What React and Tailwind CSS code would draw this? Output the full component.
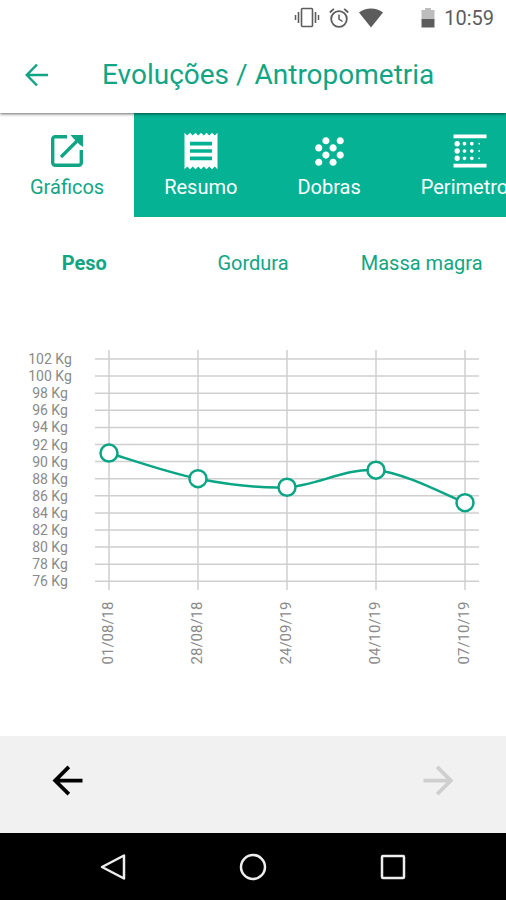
import React, { useState } from 'react';
import { MdArrowBack, MdArrowForward, MdBlurLinear, MdGrain, MdReceipt } from 'react-icons/md';

const LaunchIcon = ({ size }) => (
  <svg width={size} height={size} viewBox="0 0 36 36" fill="none" stroke="currentColor" strokeWidth="3.4">
    <path d="M18 3.700H6.200a2.500 2.500 0 0 0-2.500 2.500v23.600a2.500 2.500 0 0 0 2.500 2.500h23.600a2.500 2.500 0 0 0 2.500-2.500V17" />
    <path d="M31 5L12 24" />
    <path d="M21.500 2H34V14L30.500 11.500 24.500 5.500z" fill="currentColor" stroke="none" />
  </svg>
);

const TABS = [
  { label: 'Gráficos', icon: <LaunchIcon size={36} /> },
  { label: 'Resumo', icon: <MdReceipt size={44} /> },
  { label: 'Dobras', icon: <MdGrain size={43} /> },
  { label: 'Perimetros', icon: <MdBlurLinear size={44} /> },
];

const METRICS = ['Peso', 'Gordura', 'Massa magra'];

const WEIGHTS = [
  { date: '01/08/18', value: 91 },
  { date: '28/08/18', value: 88 },
  { date: '24/09/19', value: 87 },
  { date: '04/10/19', value: 89 },
  { date: '07/10/19', value: 85.2 },
];

const TICKS = Array.from({ length: 14 }, (_, i) => 102 - i * 2);

const xAt = (index) => 109 + index * 89;
const yAt = (value) => 18 + (102 - value) * 8.55;

// Catmull-Rom spline through the points, written as cubic beziers
const smoothPath = (points) =>
  points.slice(1).reduce((path, p2, i) => {
    const p0 = points[i - 1] || points[i];
    const p1 = points[i];
    const p3 = points[i + 2] || p2;
    const c1 = [p1[0] + (p2[0] - p0[0]) / 6, p1[1] + (p2[1] - p0[1]) / 6];
    const c2 = [p2[0] - (p3[0] - p1[0]) / 6, p2[1] - (p3[1] - p1[1]) / 6];
    return `${path} C${c1} ${c2} ${p2}`;
  }, `M${points[0]}`);

const StatusBar = () => (
  <div className="flex h-9 items-center justify-end pr-3 text-[#5c5c5c]">
    <svg width="26" height="22" viewBox="0 0 26 22" fill="none" stroke="currentColor">
      <rect x="7.500" y="1.500" width="11" height="18" rx="1" strokeWidth="1.600" />
      <path d="M4.500 5v11M21.500 5v11" strokeWidth="1.600" />
      <path d="M1.500 8v5M24.500 8v5" strokeWidth="1.500" />
    </svg>
    <svg className="ml-2" width="22" height="22" viewBox="0 0 22 22" fill="none" stroke="currentColor">
      <circle cx="11" cy="12" r="7.800" strokeWidth="1.800" />
      <path d="M11 7.500V12l3.500 2.500" strokeWidth="1.500" />
      <path d="M1.800 5.500l4-3.700M20.200 5.500l-4-3.700" strokeWidth="1.800" />
    </svg>
    <svg className="ml-2" width="26" height="22" viewBox="0 0 26 22" fill="currentColor">
      <path d="M13 20.500L1 5.500C4.500 2.800 8.500 1.500 13 1.500s8.500 1.300 12 4z" />
    </svg>
    <svg className="ml-9" width="16" height="22" viewBox="0 0 16 22" fill="currentColor">
      <path d="M1.500 3H5V1h6v2h3.500v9h-13z" fill="#bdbdbd" />
      <path d="M1.500 12h13v8.500h-13z" />
    </svg>
    <span className="ml-2 text-[20px] leading-6">10:59</span>
  </div>
);

const WeightChart = () => {
  const points = WEIGHTS.map((item, index) => [xAt(index), yAt(item.value)]);

  return (
    <svg className="w-full" viewBox="0 0 506 340" role="img" aria-label="Peso">
      <g stroke="#cfcfcf" strokeWidth="1.500">
        {TICKS.map((tick) => (
          <line key={tick} x1="95" x2="479" y1={yAt(tick)} y2={yAt(tick)} />
        ))}
        {WEIGHTS.map((item, index) => (
          <line key={item.date} x1={xAt(index)} x2={xAt(index)} y1="9" y2="249" />
        ))}
      </g>
      <g fill="#8a8a8a" textAnchor="middle">
        {TICKS.map((tick) => (
          <text key={tick} x="50" y={yAt(tick) + 5} fontSize="14">
            {tick} Kg
          </text>
        ))}
        {WEIGHTS.map((item, index) => (
          <text
            key={item.date}
            transform={`translate(${xAt(index) + 4} 292) rotate(-90)`}
            fontSize="15"
          >
            {item.date}
          </text>
        ))}
      </g>
      <path d={smoothPath(points)} fill="none" stroke="#0aa584" strokeWidth="2.500" />
      {points.map(([x, y]) => (
        <circle key={x} cx={x} cy={y} r="8.500" fill="#fff" stroke="#0aa584" strokeWidth="2.500" />
      ))}
    </svg>
  );
};

const App = () => {
  const [tab, setTab] = useState('Gráficos');
  const [metric, setMetric] = useState('Peso');

  return (
    <div className="flex min-h-screen flex-col overflow-hidden bg-white font-['Roboto',sans-serif]">
      <div className="relative shadow-[0_1px_3px_rgba(0,0,0,0.6)]">
        <StatusBar />
        <header className="flex h-[77px] items-center pl-6 text-[#12a585]">
          <button type="button" aria-label="Voltar">
            <svg width="26" height="26" viewBox="0 0 26 26" fill="none" stroke="currentColor" strokeWidth="2.500">
              <path d="M13 2.500L2.800 13 13 23.500M3 13h21" />
            </svg>
          </button>
          <h1 className="ml-[52px] text-[28px] leading-8">Evoluções / Antropometria</h1>
        </header>
      </div>

      <nav className="flex h-[104px] overflow-hidden bg-[#05b394]">
        {TABS.map((item) => (
          <button
            key={item.label}
            type="button"
            onClick={() => setTab(item.label)}
            className={`flex shrink-0 flex-col items-center px-[30px] pt-[18px] text-[20px] leading-6 ${
              tab === item.label ? 'bg-white text-[#12a585]' : 'text-white'
            }`}
          >
            <span className="flex h-10 items-center">{item.icon}</span>
            <span className="mt-1">{item.label}</span>
          </button>
        ))}
      </nav>

      <div className="mt-8 grid grid-cols-3 text-[20px] leading-7 text-[#12a585]">
        {METRICS.map((item) => (
          <button
            key={item}
            type="button"
            onClick={() => setMetric(item)}
            className={metric === item ? 'font-bold' : ''}
          >
            {item}
          </button>
        ))}
      </div>

      <main className="mt-16 flex-1">
        <WeightChart />
      </main>

      <div className="flex h-[97px] items-center justify-between bg-[#f1f1f1] px-[45px] pb-2">
        <button type="button" aria-label="Anterior" className="text-black">
          <MdArrowBack size={45} />
        </button>
        <button type="button" aria-label="Próximo" disabled className="text-[#cfcfcf]">
          <MdArrowForward size={45} />
        </button>
      </div>

      <div className="flex h-[67px] items-center justify-center gap-28 bg-black text-[#eeeeee]">
        <button type="button" aria-label="Back">
          <svg width="28" height="28" viewBox="0 0 28 28" fill="none" stroke="currentColor" strokeWidth="2.500">
            <path d="M25 2.500v23L3 14z" strokeLinejoin="round" />
          </svg>
        </button>
        <button type="button" aria-label="Home">
          <svg width="28" height="28" viewBox="0 0 28 28" fill="none" stroke="currentColor" strokeWidth="2.500">
            <circle cx="14" cy="14" r="12" />
          </svg>
        </button>
        <button type="button" aria-label="Recents">
          <svg width="28" height="28" viewBox="0 0 28 28" fill="none" stroke="currentColor" strokeWidth="2.500">
            <rect x="3" y="3" width="22" height="22" rx="1" />
          </svg>
        </button>
      </div>
    </div>
  );
};

export default App;
